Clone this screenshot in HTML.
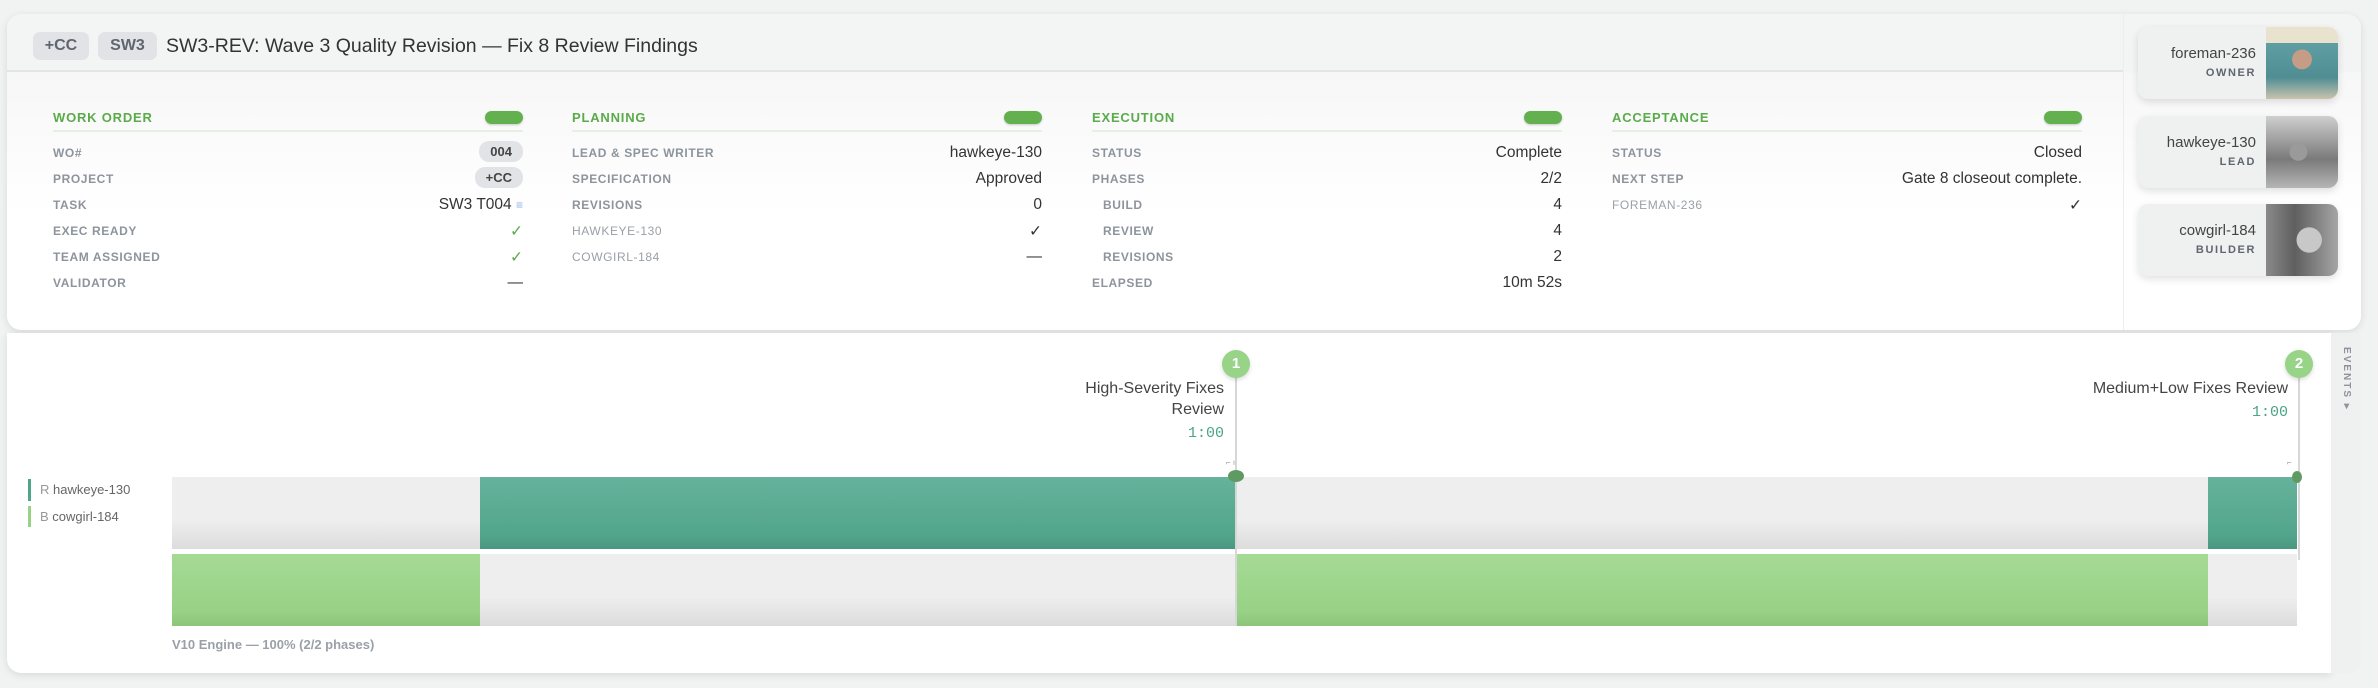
<!DOCTYPE html>
<html><head><meta charset="utf-8"><style>
*{box-sizing:border-box;margin:0;padding:0}
body{width:2378px;height:688px;background:#f1f2f2;font-family:"Liberation Sans",sans-serif;position:relative;overflow:hidden}
.abs{position:absolute}
.card{left:7px;top:14px;width:2354px;height:316px;background:linear-gradient(#f3f4f4 0,#f3f4f4 57px,#f7f7f7 60px,#fff 200px);border-radius:14px;box-shadow:0 2px 8px rgba(0,0,0,.10)}
.tag{position:absolute;top:32px;height:28px;border-radius:7px;background:#e1e3e6;color:#5f6670;font-weight:bold;font-size:16px;line-height:28px;text-align:center}
.title{left:166px;top:33px;font-size:19.5px;color:#333;line-height:26px}
.sep{left:7px;top:70px;width:2116px;height:2px;background:#e3e4e5}
.col{position:absolute;top:108px;width:470px}
.hd{position:absolute;left:0;top:2px;font-size:13px;font-weight:bold;color:#5aab4a;letter-spacing:.8px}
.pill{position:absolute;right:0;top:3px;width:38px;height:13px;border-radius:7px;background:#63b04f;box-shadow:0 1px 2px rgba(0,0,0,.2)}
.ul{position:absolute;left:0;right:0;top:22px;height:2px;background:#e6f1e3}
.row{position:absolute;left:0;right:0;height:20px}
.lb{position:absolute;left:0;top:3px;font-size:12px;font-weight:bold;color:#8d949c;letter-spacing:.6px}
.lb.n{font-weight:normal;color:#9aa0a7}
.v{position:absolute;right:0;top:1px;font-size:15.5px;color:#333}
.vp{position:absolute;right:0;top:-2px;height:21px;padding:0 11px;border-radius:10px;background:#e1e3e6;font-size:13px;font-weight:bold;color:#444;line-height:21px}
.side{left:2123px;top:14px;width:1px;height:316px;background:#eceded}
.av{position:absolute;left:2138px;width:200px;height:72px;border-radius:10px;background:#eff0f0;box-shadow:0 3px 8px rgba(0,0,0,.12);overflow:hidden}
.av .img{position:absolute;right:0;top:0;width:72px;height:72px}
.av .nm{position:absolute;right:82px;top:18px;font-size:15px;color:#444}
.av .rl{position:absolute;right:82px;top:40px;font-size:11px;font-weight:bold;color:#5f6670;letter-spacing:1.6px}
.tl{left:7px;top:333px;width:2324px;height:340px;background:#fff;border-radius:0 0 0 14px;box-shadow:0 2px 8px rgba(0,0,0,.10)}
.ev{left:2331px;top:333px;width:30px;height:340px;background:#eff0f0;border-radius:0 0 14px 0}
.circ{position:absolute;width:28px;height:28px;border-radius:50%;background:#97d487;color:#fff;font-weight:bold;font-size:15px;text-align:center;line-height:28px;box-shadow:0 2px 4px rgba(0,0,0,.15)}
.ml{position:absolute;width:2px;background:#d6d8d8}
.lab{position:absolute;font-size:16px;color:#444;text-align:right;line-height:21px}
.tm{position:absolute;font-family:"Liberation Mono",monospace;font-size:15px;color:#4aa486;text-align:right}
.gray{background:linear-gradient(#eeeeee 60%,#dcdcdc)}
.teal{background:linear-gradient(#66b29c,#52a58a 80%,#4a9880)}
.grn{background:linear-gradient(#a5da95,#98d285 80%,#8cc57a)}
</style></head><body>
<div class="abs card"></div>
<div class="tag" style="left:33px;width:56px">+CC</div>
<div class="tag" style="left:98px;width:59px">SW3</div>
<div class="abs title">SW3-REV: Wave 3 Quality Revision — Fix 8 Review Findings</div>
<div class="abs sep"></div>

<div class="col" style="left:53px">
<div class="hd">WORK ORDER</div><div class="pill"></div><div class="ul"></div>
<div class="row" style="top:35px"><div class="lb">WO#</div><div class="vp">004</div></div>
<div class="row" style="top:61px"><div class="lb">PROJECT</div><div class="vp">+CC</div></div>
<div class="row" style="top:87px"><div class="lb">TASK</div><div class="v">SW3 T004 <span style="color:#8fb3e6;font-size:12px">≡</span></div></div>
<div class="row" style="top:113px"><div class="lb">EXEC READY</div><div class="v" style="color:#5aab4a">✓</div></div>
<div class="row" style="top:139px"><div class="lb">TEAM ASSIGNED</div><div class="v" style="color:#5aab4a">✓</div></div>
<div class="row" style="top:165px"><div class="lb">VALIDATOR</div><div class="v">—</div></div>
</div>

<div class="col" style="left:572px">
<div class="hd">PLANNING</div><div class="pill"></div><div class="ul"></div>
<div class="row" style="top:35px"><div class="lb">LEAD &amp; SPEC WRITER</div><div class="v">hawkeye-130</div></div>
<div class="row" style="top:61px"><div class="lb">SPECIFICATION</div><div class="v">Approved</div></div>
<div class="row" style="top:87px"><div class="lb">REVISIONS</div><div class="v">0</div></div>
<div class="row" style="top:113px"><div class="lb n">HAWKEYE-130</div><div class="v">✓</div></div>
<div class="row" style="top:139px"><div class="lb n">COWGIRL-184</div><div class="v">—</div></div>
</div>

<div class="col" style="left:1092px">
<div class="hd">EXECUTION</div><div class="pill"></div><div class="ul"></div>
<div class="row" style="top:35px"><div class="lb">STATUS</div><div class="v">Complete</div></div>
<div class="row" style="top:61px"><div class="lb">PHASES</div><div class="v">2/2</div></div>
<div class="row" style="top:87px"><div class="lb" style="left:11px">BUILD</div><div class="v">4</div></div>
<div class="row" style="top:113px"><div class="lb" style="left:11px">REVIEW</div><div class="v">4</div></div>
<div class="row" style="top:139px"><div class="lb" style="left:11px">REVISIONS</div><div class="v">2</div></div>
<div class="row" style="top:165px"><div class="lb">ELAPSED</div><div class="v">10m 52s</div></div>
</div>

<div class="col" style="left:1612px">
<div class="hd">ACCEPTANCE</div><div class="pill"></div><div class="ul"></div>
<div class="row" style="top:35px"><div class="lb">STATUS</div><div class="v">Closed</div></div>
<div class="row" style="top:61px"><div class="lb">NEXT STEP</div><div class="v">Gate 8 closeout complete.</div></div>
<div class="row" style="top:87px"><div class="lb n">FOREMAN-236</div><div class="v">✓</div></div>
</div>

<div class="abs side"></div>
<div class="av" style="top:27px"><div class="nm">foreman-236</div><div class="rl">OWNER</div><div class="img" style="background:radial-gradient(circle at 50% 45%,#c79c86 0 18%,transparent 19%),linear-gradient(#e8e2cf 0 22%,#5f9fa3 22%,#4f8d93 70%,#c9c3ad)"></div></div>
<div class="av" style="top:116px"><div class="nm">hawkeye-130</div><div class="rl">LEAD</div><div class="img" style="background:radial-gradient(circle at 45% 50%,#9a9a9a 0 16%,transparent 17%),linear-gradient(#cfcfcf,#7a7a7a 60%,#b5b5b5)"></div></div>
<div class="av" style="top:204px"><div class="nm">cowgirl-184</div><div class="rl">BUILDER</div><div class="img" style="background:radial-gradient(circle at 60% 50%,#c8c8c8 0 22%,transparent 23%),linear-gradient(90deg,#8a8a8a,#5f5f5f 40%,#a5a5a5)"></div></div>

<div class="abs tl"></div>
<div class="abs ev"></div>
<div class="abs" style="left:2340px;top:347px;transform-origin:0 0;transform:translate(12px,0) rotate(90deg);font-size:10px;font-weight:bold;color:#8d949c;letter-spacing:2px;white-space:nowrap">EVENTS ▸</div>

<div class="abs" style="left:28px;top:479px;width:3px;height:22px;background:#4fa58a"></div>
<div class="abs" style="left:40px;top:482px;font-size:13px;color:#666"><span style="color:#999">R</span> hawkeye-130</div>
<div class="abs" style="left:28px;top:506px;width:3px;height:21px;background:#98d285"></div>
<div class="abs" style="left:40px;top:509px;font-size:13px;color:#666"><span style="color:#999">B</span> cowgirl-184</div>

<div class="abs gray" style="left:172px;top:477px;width:2125px;height:72px"></div>
<div class="abs teal" style="left:480px;top:477px;width:756px;height:72px"></div>
<div class="abs teal" style="left:2208px;top:477px;width:89px;height:72px"></div>
<div class="abs gray" style="left:172px;top:554px;width:2125px;height:72px"></div>
<div class="abs grn" style="left:172px;top:554px;width:308px;height:72px"></div>
<div class="abs grn" style="left:1236px;top:554px;width:972px;height:72px"></div>

<div class="ml" style="left:1235px;top:364px;height:262px"></div>
<div class="ml" style="left:2298px;top:364px;height:196px"></div>
<div class="abs" style="left:1228px;top:470px;width:16px;height:12px;border-radius:50%;background:#5f9a62"></div>
<div class="abs" style="left:2292px;top:471px;width:10px;height:12px;border-radius:50%;background:#5f9a62"></div>
<div class="abs" style="left:1226px;top:458px;font-size:8px;color:#999">⌐ ı</div>
<div class="abs" style="left:2287px;top:458px;font-size:8px;color:#999">⌐</div>
<div class="circ" style="left:1222px;top:350px">1</div>
<div class="circ" style="left:2285px;top:350px">2</div>
<div class="lab" style="right:1154px;top:378px">High-Severity Fixes<br>Review</div>
<div class="tm" style="right:1154px;top:425px">1:00</div>
<div class="lab" style="right:90px;top:378px;white-space:nowrap">Medium+Low Fixes Review</div>
<div class="tm" style="right:90px;top:404px">1:00</div>
<div class="abs" style="left:172px;top:637px;font-size:13px;font-weight:bold;color:#9aa0a7">V10 Engine — 100% (2/2 phases)</div>
</body></html>
